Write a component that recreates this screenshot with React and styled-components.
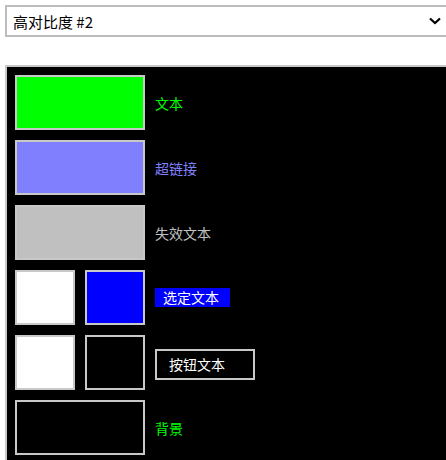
import React from 'react'
import styled, { createGlobalStyle } from 'styled-components'

const GlobalStyle = createGlobalStyle`
  html, body {
    margin: 0;
    padding: 0;
    background: #ffffff;
    overflow: hidden;
  }
  body {
    font-family: "Noto Sans CJK SC", "Noto Sans", "Liberation Sans", sans-serif;
  }
`

const Page = styled.div`
  padding: 5px;
  width: 466px;
`

const Select = styled.div`
  display: flex;
  align-items: center;
  justify-content: space-between;
  box-sizing: border-box;
  width: 100%;
  height: 32px;
  padding: 0 28px 0 6px;
  border: 2px solid #bdbdbd;
  background: #fff;
  color: #000;
  font-size: 15px;
  line-height: 1;
`

const Panel = styled.div`
  margin-top: 28px;
  box-sizing: border-box;
  height: 420px;
  padding: 8px;
  border: 2px solid #c8c8c8;
  background: #000;
  display: flex;
  flex-direction: column;
  gap: 10px;
`

const Row = styled.div`
  display: flex;
  align-items: center;
  gap: 10px;
  height: 55px;
`

const Swatches = styled.div`
  display: flex;
  gap: 10px;
  width: 130px;
`

const Swatch = styled.div`
  box-sizing: border-box;
  width: ${({ $w }) => $w}px;
  height: 55px;
  border: 2px solid #c8c8c8;
  background: ${({ $bg }) => $bg};
`

const Label = styled.span`
  font-size: 14px;
  line-height: 1;
  color: ${({ $color }) => $color};
`

const Highlight = styled.span`
  box-sizing: border-box;
  width: 75px;
  height: 19px;
  padding-left: 8px;
  background: #0000ff;
  color: #fff;
  font-size: 14px;
  line-height: 19px;
`

const ButtonBox = styled.span`
  box-sizing: border-box;
  width: 100px;
  height: 31px;
  padding-left: 12px;
  border: 2px solid #c8c8c8;
  color: #fff;
  font-size: 14px;
  line-height: 27px;
  margin-top: 4px;
`

export default function App() {
  return (
    <Page>
      <GlobalStyle />
      <Select>
        <span>高对比度 #2</span>
        <svg width="12" height="8" viewBox="0 0 12 8">
          <path d="M1 1.5 L6 6 L11 1.5" fill="none" stroke="#000" strokeWidth="2.2" />
        </svg>
      </Select>
      <Panel>
        <Row>
          <Swatches>
            <Swatch $w={130} $bg="#00ff00" />
          </Swatches>
          <Label $color="#00ff00">文本</Label>
        </Row>
        <Row>
          <Swatches>
            <Swatch $w={130} $bg="#8080ff" />
          </Swatches>
          <Label $color="#8080ff">超链接</Label>
        </Row>
        <Row>
          <Swatches>
            <Swatch $w={130} $bg="#c0c0c0" />
          </Swatches>
          <Label $color="#c0c0c0">失效文本</Label>
        </Row>
        <Row>
          <Swatches>
            <Swatch $w={60} $bg="#ffffff" />
            <Swatch $w={60} $bg="#0000ff" />
          </Swatches>
          <Highlight>选定文本</Highlight>
        </Row>
        <Row>
          <Swatches>
            <Swatch $w={60} $bg="#ffffff" />
            <Swatch $w={60} $bg="#000000" />
          </Swatches>
          <ButtonBox>按钮文本</ButtonBox>
        </Row>
        <Row>
          <Swatches>
            <Swatch $w={130} $bg="#000000" />
          </Swatches>
          <Label $color="#00ff00">背景</Label>
        </Row>
      </Panel>
    </Page>
  )
}
